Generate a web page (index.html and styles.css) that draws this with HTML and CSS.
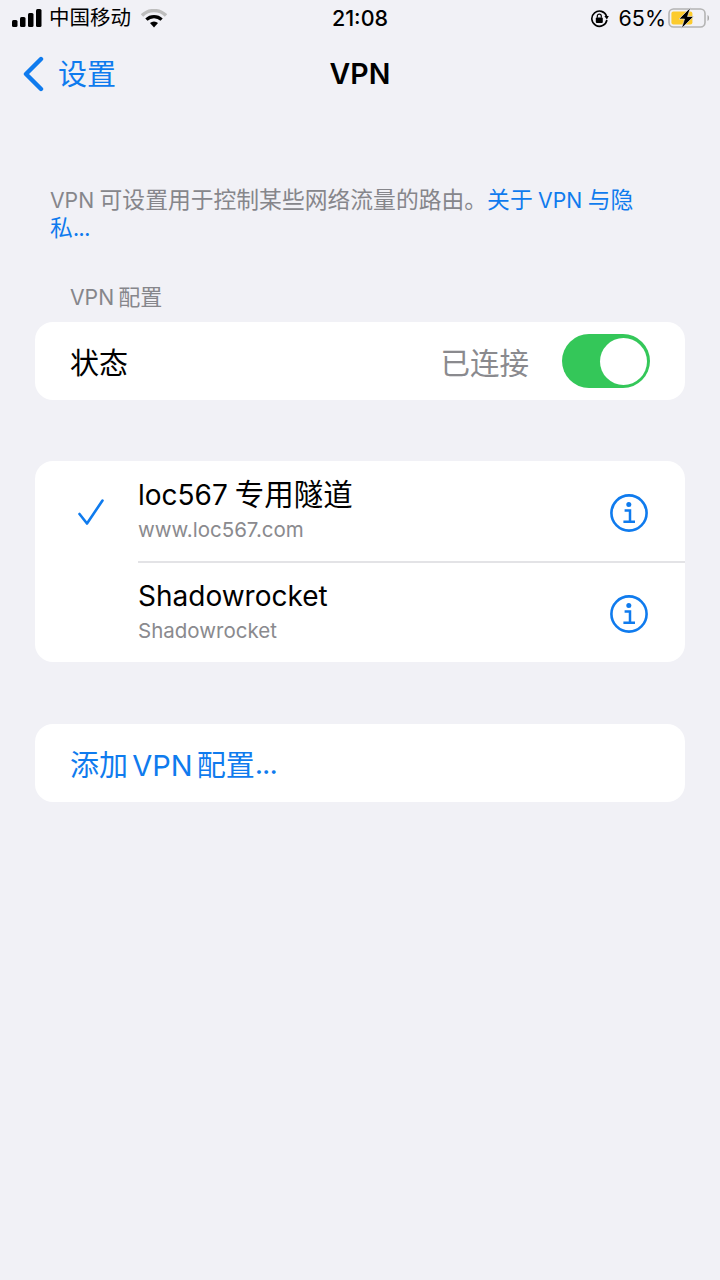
FILE: index.html
```html
<!DOCTYPE html>
<html lang="zh-CN">
<head>
    <meta charset="UTF-8">
    <meta name="viewport" content="width=device-width, initial-scale=1.0">
    <title>VPN</title>
    <link rel="stylesheet" href="styles.css">
</head>
<body>
    <!-- Barra de estado -->
    <div class="status-bar">
        <div class="status-left">
            <svg class="signal" width="30" height="18" viewBox="0 0 30 18">
                <rect x="0" y="11" width="5.5" height="7" rx="1.5" fill="#000"/>
                <rect x="8" y="8" width="5.5" height="10" rx="1.5" fill="#000"/>
                <rect x="16" y="4" width="5.5" height="14" rx="1.5" fill="#000"/>
                <rect x="24" y="0" width="5.5" height="18" rx="1.5" fill="#000"/>
            </svg>
            <span class="carrier">中国移动</span>
            <svg class="wifi" width="26" height="19" viewBox="0 0 26 19">
                <path d="M1 6.5 A17 17 0 0 1 25 6.5" fill="none" stroke="#bdbdbd" stroke-width="3.4"/>
                <path d="M5.4 10.6 A11 11 0 0 1 20.6 10.6" fill="none" stroke="#000" stroke-width="3.2"/>
                <path d="M9 14 L13 18.4 L17 14 A6 6 0 0 0 9 14 Z" fill="#000"/>
            </svg>
        </div>
        <div class="status-time">21:08</div>
        <div class="status-right">
            <svg class="lock" width="19" height="19" viewBox="0 0 19 19">
                <path d="M16.6 7.2 A7.6 7.6 0 1 0 16.9 11" fill="none" stroke="#000" stroke-width="1.6"/>
                <path d="M14.3 7 L18.8 7 L16.9 10.4 Z" fill="#000"/>
                <rect x="5.8" y="8.6" width="7" height="5.4" rx="1" fill="#000"/>
                <path d="M7.3 8.8 V7.2 a2 2 0 0 1 4 0 V8.8" fill="none" stroke="#000" stroke-width="1.2"/>
            </svg>
            <span class="battery-pct">65%</span>
            <svg class="battery" width="43" height="22" viewBox="0 0 43 22">
                <rect x="1" y="2" width="36" height="18" rx="4.5" fill="none" stroke="#b4b4b4" stroke-width="1.6"/>
                <rect x="3.4" y="4.4" width="21" height="13.2" rx="2" fill="#fccb2e"/>
                <path d="M39.5 8 C41.5 8.6 41.5 13.4 39.5 14 Z" fill="#a8a8a8"/>
                <path d="M22.5 0.5 L11 12 H16.5 L13.5 21.5 L25.5 9.5 H19.5 Z" fill="#000" stroke="#f1f1f6" stroke-width="0.6"/>
            </svg>
        </div>
    </div>

    <!-- Navegación -->
    <div class="nav-bar">
        <a class="nav-back">
            <svg width="22" height="36" viewBox="0 0 22 36">
                <path d="M19 3 L4 18 L19 33" fill="none" stroke="#0f7bee" stroke-width="4.4" stroke-linecap="round" stroke-linejoin="round"/>
            </svg>
            <span>设置</span>
        </a>
        <div class="nav-title">VPN</div>
    </div>

    <p class="intro"><span class="latin">VPN</span> 可设置用于控制某些网络流量的路由。<a class="link">关于 <span class="latin">VPN</span> 与隐</a><br><a class="link">私<span class="dots">...</span></a></p>

    <div class="section-label"><span class="latin">VPN</span> 配置</div>
    <div class="card status-card">
        <span class="status-name">状态</span>
        <span class="status-value">已连接</span>
        <div class="switch"><div class="knob"></div></div>
    </div>

    <div class="card list-card">
        <div class="vpn-row">
            <div class="check-col">
                <svg width="26" height="26" viewBox="0 0 26 26">
                    <path d="M1.5 15 L9 24.5 L24.5 1.5" fill="none" stroke="#0f7bee" stroke-width="2.6" stroke-linecap="round" stroke-linejoin="round"/>
                </svg>
            </div>
            <div class="vpn-text">
                <div class="vpn-name">loc567 <span class="cjk">专用隧道</span></div>
                <div class="vpn-sub">www.loc567.com</div>
            </div>
            <svg class="info" width="40" height="40" viewBox="0 0 40 40">
                <circle cx="20" cy="20" r="17.6" fill="none" stroke="#0f7bee" stroke-width="2.6"/>
                <circle cx="19.8" cy="11.6" r="2.5" fill="#0f7bee"/>
                <path d="M15.6 17.4 H21 V28.8 M14.4 28.8 H26" fill="none" stroke="#0f7bee" stroke-width="2.5"/>
            </svg>
        </div>
        <div class="vpn-row">
            <div class="check-col"></div>
            <div class="vpn-text">
                <div class="vpn-name">Shadowrocket</div>
                <div class="vpn-sub">Shadowrocket</div>
            </div>
            <svg class="info" width="40" height="40" viewBox="0 0 40 40">
                <circle cx="20" cy="20" r="17.6" fill="none" stroke="#0f7bee" stroke-width="2.6"/>
                <circle cx="19.8" cy="11.6" r="2.5" fill="#0f7bee"/>
                <path d="M15.6 17.4 H21 V28.8 M14.4 28.8 H26" fill="none" stroke="#0f7bee" stroke-width="2.5"/>
            </svg>
        </div>
    </div>

    <div class="card add-card">添加 VPN 配置<span class="dots">...</span></div>
</body>
</html>
```

FILE: styles.css
```css
* {
    box-sizing: border-box;
}

body {
    font-family: "Inter", "Noto Sans CJK SC", sans-serif;
    margin: 0;
    padding: 0;
    width: 720px;
    min-height: 1280px;
    background-color: #f1f1f6;
    color: #000000;
}

.status-bar {
    height: 38px;
    display: flex;
    align-items: center;
    justify-content: space-between;
    padding: 0 9px 2px 12px;
    position: relative;
}

.status-left {
    display: flex;
    align-items: center;
}

.carrier {
    font-size: 20.5px;
    margin-left: 7px;
    line-height: 24px;
}

.wifi {
    margin-left: 10px;
}

.status-time {
    position: absolute;
    left: 0;
    right: 0;
    text-align: center;
    font-size: 21.5px;
    font-weight: 500;
}

.status-right {
    display: flex;
    align-items: center;
}

.battery-pct {
    font-size: 21.5px;
    margin-left: 9px;
    margin-right: 2px;
}

.nav-bar {
    height: 71px;
    display: flex;
    align-items: center;
    justify-content: center;
    position: relative;
}

.nav-back {
    position: absolute;
    left: 22px;
    top: 17px;
    display: flex;
    align-items: center;
    color: #0f7bee;
    font-size: 29px;
    line-height: 36px;
}

.nav-back span {
    margin-left: 14px;
    padding-top: 2px;
}

.nav-title {
    font-size: 28.5px;
    font-weight: 600;
}

.intro {
    margin: 77px 70px 0 50px;
    font-size: 22.8px;
    line-height: 28px;
    color: #86868b;
    word-spacing: -1px;
}

.latin {
    font-size: 21.2px;
}

.dots {
    letter-spacing: -1px;
}

.link {
    color: #0f7bee;
}

.section-label {
    margin: 42px 0 0 70px;
    font-size: 22px;
    line-height: 26px;
    color: #86868b;
    word-spacing: -2px;
}

.card {
    background-color: #ffffff;
    border-radius: 18px;
    margin: 0 35px;
}

.status-card {
    height: 78px;
    margin-top: 12px;
    display: flex;
    align-items: center;
    padding: 0 35px;
}

.status-name {
    font-size: 29px;
    flex: 1;
}

.status-value {
    font-size: 29.5px;
    color: #8a8a8e;
    margin-right: 33px;
}

.switch {
    width: 88px;
    height: 54px;
    border-radius: 27px;
    background-color: #34c759;
    padding: 3.5px;
    display: flex;
    justify-content: flex-end;
}

.knob {
    width: 47px;
    height: 47px;
    border-radius: 50%;
    background-color: #ffffff;
}

.list-card {
    height: 201px;
    margin-top: 61px;
}

.vpn-row {
    height: 100px;
    display: flex;
    align-items: center;
    padding-right: 36px;
    position: relative;
}

.vpn-row + .vpn-row {
    height: 101px;
    border-top: 2px solid #e3e3e6;
    margin-left: 103px;
}

.vpn-row + .vpn-row .check-col {
    display: none;
}

.vpn-text {
    flex: 1;
    padding-bottom: 3px;
}

.check-col {
    width: 103px;
    flex-shrink: 0;
    padding-left: 43px;
    padding-top: 2px;
    display: flex;
}

.info {
    margin-top: 3px;
}

.vpn-name {
    font-size: 28px;
    line-height: 36px;
    word-spacing: -1px;
}

.cjk {
    font-size: 29.5px;
    line-height: 1;
}

.vpn-sub {
    font-size: 20.5px;
    line-height: 26px;
    color: #8a8a8e;
    margin-top: 4px;
}

.add-card {
    height: 78px;
    margin-top: 62px;
    display: flex;
    align-items: center;
    padding: 0 35px;
    font-size: 29px;
    color: #0f7bee;
    white-space: pre;
    word-spacing: -4px;
}
```
